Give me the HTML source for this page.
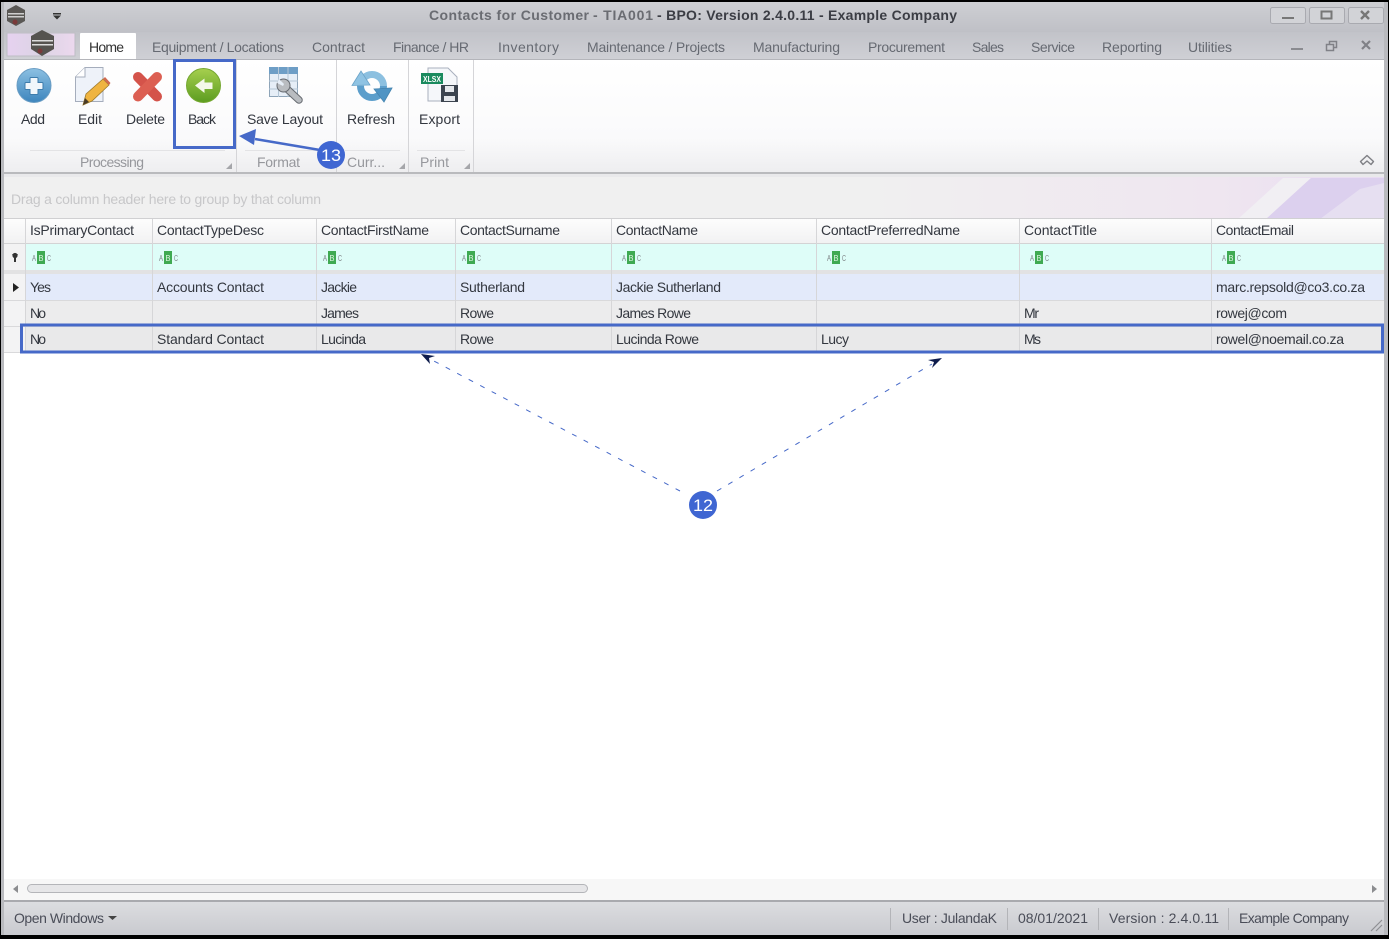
<!DOCTYPE html>
<html><head><meta charset="utf-8"><title>Contacts for Customer</title>
<style>html,body{margin:0;padding:0;background:#fff}svg{display:block;filter:blur(.35px)}text{font-family:"Liberation Sans",sans-serif;font-size:14px;fill:#33373f}</style></head>
<body>
<svg xmlns="http://www.w3.org/2000/svg" width="1389" height="939" viewBox="0 0 1389 939">
<defs>
<linearGradient id="tb" x1="0" y1="0" x2="0" y2="1"><stop offset="0" stop-color="#cfd0d4"/><stop offset="1" stop-color="#bfc0c6"/></linearGradient>
<linearGradient id="tabs" x1="0" y1="0" x2="0" y2="1"><stop offset="0" stop-color="#c2c3c9"/><stop offset="1" stop-color="#cfd0d5"/></linearGradient>
<linearGradient id="rib" x1="0" y1="0" x2="0" y2="1"><stop offset="0" stop-color="#fff"/><stop offset="0.7" stop-color="#fafafb"/><stop offset="1" stop-color="#eeeef0"/></linearGradient>
<linearGradient id="st" x1="0" y1="0" x2="0" y2="1"><stop offset="0" stop-color="#dcdde0"/><stop offset="1" stop-color="#c9cacf"/></linearGradient>
<linearGradient id="hd" x1="0" y1="0" x2="0" y2="1"><stop offset="0" stop-color="#fdfdfd"/><stop offset="1" stop-color="#f1f1f2"/></linearGradient>
<linearGradient id="blue" x1="0" y1="0" x2="0" y2="1"><stop offset="0" stop-color="#8cc0e2"/><stop offset="1" stop-color="#3d85bd"/></linearGradient>
<linearGradient id="green" x1="0" y1="0" x2="0" y2="1"><stop offset="0" stop-color="#a6cf4e"/><stop offset="1" stop-color="#5c9c20"/></linearGradient>
<linearGradient id="logo" x1="0" y1="0" x2="1" y2="0"><stop offset="0" stop-color="#e6d2f0"/><stop offset="0.5" stop-color="#dcd4e4"/><stop offset="1" stop-color="#ecd8ee"/></linearGradient>
<linearGradient id="purp" x1="0" y1="0" x2="1" y2="0"><stop offset="0" stop-color="#f0f0f0"/><stop offset="0.62" stop-color="#f0f0f0"/><stop offset="0.88" stop-color="#efe6f0"/><stop offset="1" stop-color="#e8dcf2"/></linearGradient>
</defs>

<rect width="1389" height="939" fill="#fff"/>
<!-- title bar -->
<rect x="0" y="0" width="1389" height="32" fill="url(#tb)"/>
<rect x="0" y="32" width="1389" height="27" fill="url(#tabs)"/>
<!-- app icon -->
<polygon points="16,5 25,10 25,21 16,26 7,21 7,10" fill="#5a5855"/>
<rect x="8" y="13" width="16" height="1.500" fill="#cfcfcf"/><rect x="8" y="16" width="16" height="1.500" fill="#cfcfcf"/>
<circle cx="15" cy="22" r="2.500" fill="#7a3a3a"/>
<path d="M53 13h8v1.500h-8zM53 15.500h8l-4 4z" fill="#333"/>
<text x="429" y="20" textLength="160" font-weight="bold" style="fill:#6a6c72">Contacts for Customer</text>
<text x="593" y="20" textLength="60" font-weight="bold" style="fill:#6a6c72"> - TIA001</text>
<text x="657" y="20" textLength="300" font-weight="bold" style="fill:#3b3d44">- BPO: Version 2.4.0.11 - Example Company</text>
<!-- window buttons -->
<g fill="#d2d3d7" stroke="#a9aab0"><rect x="1270.500" y="7.500" width="35" height="16" rx="2"/><rect x="1309.500" y="7.500" width="35" height="16" rx="2"/><rect x="1348.500" y="7.500" width="35" height="16" rx="2"/></g>
<rect x="1282" y="17" width="12" height="2" fill="#777"/>
<rect x="1321.500" y="11.500" width="10" height="7" fill="none" stroke="#777" stroke-width="2"/>
<path d="M1361 11l8 8M1369 11l-8 8" stroke="#777" stroke-width="2.400"/>

<!-- logo tab -->
<rect x="7" y="33" width="68" height="23" fill="url(#logo)" stroke="#bdbdc4"/>
<polygon points="42,30 54,36 54,49 42,56 31,49 31,36" fill="#55534f"/>
<rect x="32" y="40" width="21" height="1.500" fill="#dcdcdc"/><rect x="32" y="44" width="21" height="1.500" fill="#dcdcdc"/>
<circle cx="40" cy="51" r="2.500" fill="#7a3a3a"/>
<!-- Home tab -->
<path d="M80 59V34q0-1 1-1h54q1 0 1 1V59z" fill="#fff"/>
<text x="89" y="52" textLength="35" style="fill:#333">Home</text>
<text x="152" y="52" textLength="132" style="fill:#666a72">Equipment / Locations</text>
<text x="312" y="52" textLength="53" style="fill:#666a72">Contract</text>
<text x="393" y="52" textLength="76" style="fill:#666a72">Finance / HR</text>
<text x="498" y="52" textLength="61" style="fill:#666a72">Inventory</text>
<text x="587" y="52" textLength="138" style="fill:#666a72">Maintenance / Projects</text>
<text x="753" y="52" textLength="87" style="fill:#666a72">Manufacturing</text>
<text x="868" y="52" textLength="77" style="fill:#666a72">Procurement</text>
<text x="972" y="52" textLength="32" style="fill:#666a72">Sales</text>
<text x="1031" y="52" textLength="44" style="fill:#666a72">Service</text>
<text x="1102" y="52" textLength="60" style="fill:#666a72">Reporting</text>
<text x="1188" y="52" textLength="44" style="fill:#666a72">Utilities</text>
<rect x="1291" y="48" width="12" height="2" fill="#8a8b90"/>
<path d="M1326.500 44.500h7v6h-7zM1329.500 44.500v-3h7v6h-3" fill="none" stroke="#808187" stroke-width="1.500"/>
<path d="M1362 41l8 8M1370 41l-8 8" stroke="#808187" stroke-width="2.200"/>

<!-- ribbon -->
<rect x="4" y="59" width="1380" height="113" fill="url(#rib)"/>
<rect x="4" y="59" width="1380" height="1" fill="#b4b5ba"/>
<rect x="4" y="172" width="1380" height="2" fill="#b9babd"/>
<rect x="4" y="174" width="1380" height="3" fill="#e9e9eb"/>
<g fill="#d5d5d8"><rect x="236" y="60" width="1" height="112"/><rect x="336" y="60" width="1" height="112"/><rect x="408" y="60" width="1" height="112"/><rect x="473" y="60" width="1" height="112"/></g>
<g fill="#e3e3e5"><rect x="30" y="150" width="195" height="1"/><rect x="245" y="150" width="82" height="1"/><rect x="345" y="150" width="55" height="1"/><rect x="417" y="150" width="48" height="1"/></g>

<!-- Add -->
<circle cx="34" cy="85.500" r="17" fill="url(#blue)" stroke="#6a9dc4"/>
<path d="M31 77.500h6a1 1 0 0 1 1 1v4h4a1 1 0 0 1 1 1v5a1 1 0 0 1-1 1h-4v4a1 1 0 0 1-1 1h-6a1 1 0 0 1-1-1v-4h-4a1 1 0 0 1-1-1v-5a1 1 0 0 1 1-1h4v-4a1 1 0 0 1 1-1z" fill="#f0f6fb" stroke="#3d7cac"/>
<!-- Edit -->
<path d="M85 67.500h18v34H75.500V77z" fill="#eef2f9" stroke="#a5adbc"/><path d="M85 67.500V77h-9.500" fill="#fff" stroke="#a5adbc"/>
<path d="M83 105l3-11 17-15 6 6-17 16z" fill="#efb440" stroke="#9d7a2c" stroke-width=".8"/>
<path d="M103 79l6 6 1.500-2-5.500-6z" fill="#cf6a50"/><path d="M83 105l2-7 4 4z" fill="#4a3c28"/>
<!-- Delete -->
<path d="M138 77l19 19.500" stroke="#d4534a" stroke-width="10" stroke-linecap="round"/>
<path d="M157 77l-19 19.500" stroke="#dc5f52" stroke-width="10" stroke-linecap="round"/>
<!-- Back -->
<circle cx="203.500" cy="85.500" r="17" fill="url(#green)" stroke="#76a832"/>
<path d="M195 85.500l9.500-7v4h8v6.500h-8v4z" fill="#f4f8e8"/>
<!-- Save Layout -->
<rect x="269.500" y="67.500" width="28" height="29" fill="#e6eef7" stroke="#8ea4b8"/><rect x="269" y="67" width="29" height="7" fill="#6e9ec6"/>
<path d="M269 81h29M269 89h29M278.500 67v30M288 67v30" stroke="#b4c6d6"/>
<path d="M285 87L299 100" stroke="#666a70" stroke-width="7.500" stroke-linecap="round"/>
<path d="M285 87L299 100" stroke="#b9bcc0" stroke-width="5.500" stroke-linecap="round"/>
<circle cx="283.500" cy="85.500" r="6.500" fill="#b9bcc0" stroke="#666a70"/>
<path d="M279 79l5 5-1 2-6-3z" fill="#e6eef7"/>
<!-- Refresh -->
<path d="M360.500 86A11.500 11.500 0 0 1 383.500 86" fill="none" stroke="#8cc0e0" stroke-width="7"/>
<path d="M383.500 86A11.500 11.500 0 0 1 360.500 86" fill="none" stroke="#5c9ecb" stroke-width="7"/>
<path d="M352 85.500L361 71l9 14z" fill="#8fc3e3" stroke="#6aa3c8" stroke-width=".8"/>
<path d="M392 88L384 102l-10-13z" fill="#4f94c4" stroke="#4585b0" stroke-width=".8"/>
<!-- Export -->
<path d="M428 68h20l9 9v24h-29z" fill="#f5f7fa" stroke="#a9b0bd"/><rect x="421" y="73" width="22" height="11" fill="#1a8a5e"/>
<text x="423" y="82" textLength="18" lengthAdjust="spacingAndGlyphs" font-weight="bold" style="fill:#fff;font-size:8px">XLSX</text>
<rect x="441" y="85" width="17" height="17" fill="#3c444f"/><rect x="445" y="86" width="9" height="6" fill="#e5e8ec"/><rect x="444" y="96" width="11" height="5" fill="#e5e8ec"/>

<text x="21" y="124" textLength="24">Add</text>
<text x="78" y="124" textLength="24">Edit</text>
<text x="126" y="124" textLength="39">Delete</text>
<text x="188" y="124" textLength="28">Back</text>
<text x="247" y="124" textLength="76">Save Layout</text>
<text x="347" y="124" textLength="48">Refresh</text>
<text x="419" y="124" textLength="41">Export</text>
<text x="80" y="167" textLength="64" style="fill:#96979c">Processing</text>
<text x="257" y="167" textLength="43" style="fill:#96979c">Format</text>
<text x="347" y="167" textLength="38" style="fill:#96979c">Curr...</text>
<text x="420" y="167" textLength="29" style="fill:#96979c">Print</text>
<g fill="#a5a6aa"><path d="M232 163v6h-6z"/><path d="M405 163v6h-6z"/><path d="M470 163v6h-6z"/></g>
<path d="M1360.500 161.500l6.500-6 6.500 6-2.500 3-4-3.500-4 3.500z" fill="#f0f0f2" stroke="#7f8085" stroke-width="1.400" stroke-linejoin="round"/>

<!-- group panel -->
<rect x="4" y="177" width="1380" height="42" fill="url(#purp)"/>
<path d="M1238 219l45-41h28l-45 41z" fill="#f1eff3"/>
<path d="M1266 219l45-41h73v41z" fill="#dcd0ee"/>
<path d="M1320 219l40-30 24-6v36z" fill="#e6dff1"/>
<text x="11" y="204" textLength="310" style="fill:#c7c7c9">Drag a column header here to group by that column</text>

<!-- grid header -->
<rect x="4" y="219" width="1380" height="25" fill="url(#hd)"/>
<rect x="4" y="218" width="1380" height="1" fill="#d0d0d2"/>
<rect x="4" y="244" width="1380" height="26" fill="#defdf8"/>
<rect x="4" y="244" width="21" height="26" fill="#f2f2f3"/>
<rect x="4" y="243" width="1380" height="1" fill="#d3d3d5"/>
<rect x="4" y="270" width="1380" height="4" fill="#e2e2e3"/>
<rect x="25" y="274" width="1359" height="26" fill="#e3eafa"/>
<rect x="25" y="300" width="1359" height="26" fill="#ececed"/>
<rect x="25" y="326" width="1359" height="26" fill="#e9e9ea"/>
<rect x="4" y="274" width="21" height="78" fill="#f3f3f4"/>
<g fill="#d9d9db"><rect x="4" y="300" width="1380" height="1"/><rect x="4" y="326" width="1380" height="1"/><rect x="4" y="352" width="1380" height="1"/></g>
<g fill="#d6d6d8"><rect x="25" y="219" width="1" height="133"/><rect x="152" y="219" width="1" height="133"/><rect x="316" y="219" width="1" height="133"/><rect x="455" y="219" width="1" height="133"/><rect x="611" y="219" width="1" height="133"/><rect x="816" y="219" width="1" height="133"/><rect x="1019" y="219" width="1" height="133"/><rect x="1211" y="219" width="1" height="133"/></g>

<text x="30" y="235" textLength="104">IsPrimaryContact</text>
<text x="157" y="235" textLength="107">ContactTypeDesc</text>
<text x="321" y="235" textLength="108">ContactFirstName</text>
<text x="460" y="235" textLength="100">ContactSurname</text>
<text x="616" y="235" textLength="82">ContactName</text>
<text x="821" y="235" textLength="139">ContactPreferredName</text>
<text x="1024" y="235" textLength="73">ContactTitle</text>
<text x="1216" y="235" textLength="78">ContactEmail</text>

<!-- filter icons -->
<g id="f1"><text x="32" y="261" textLength="4" lengthAdjust="spacingAndGlyphs" style="font-size:8px;fill:#7c8285">A</text><rect x="37" y="251" width="8" height="13" fill="#3faa52"/><text x="38.500" y="261" textLength="5" lengthAdjust="spacingAndGlyphs" style="font-size:8px;fill:#dff5e3">B</text><text x="47" y="261" textLength="4" lengthAdjust="spacingAndGlyphs" style="font-size:8px;fill:#7c8285">C</text></g>
<use href="#f1" x="127"/><use href="#f1" x="291"/><use href="#f1" x="430"/><use href="#f1" x="590"/><use href="#f1" x="795"/><use href="#f1" x="998"/><use href="#f1" x="1190"/>
<path d="M12 254h6l-2 3v5h-2v-5z" fill="#333"/><circle cx="15" cy="255.500" r="2.600" fill="#333"/>
<path d="M13 283l6 4.500-6 4.500z" fill="#222"/>

<text x="30" y="292" textLength="21">Yes</text>
<text x="157" y="292" textLength="107">Accounts Contact</text>
<text x="321" y="292" textLength="36">Jackie</text>
<text x="460" y="292" textLength="65">Sutherland</text>
<text x="616" y="292" textLength="105">Jackie Sutherland</text>
<text x="1216" y="292" textLength="149">marc.repsold@co3.co.za</text>
<text x="30" y="318" textLength="16">No</text>
<text x="321" y="318" textLength="38">James</text>
<text x="460" y="318" textLength="34">Rowe</text>
<text x="616" y="318" textLength="75">James Rowe</text>
<text x="1024" y="318" textLength="15">Mr</text>
<text x="1216" y="318" textLength="71">rowej@com</text>
<text x="30" y="344" textLength="16">No</text>
<text x="157" y="344" textLength="107">Standard Contact</text>
<text x="321" y="344" textLength="45">Lucinda</text>
<text x="460" y="344" textLength="34">Rowe</text>
<text x="616" y="344" textLength="83">Lucinda Rowe</text>
<text x="821" y="344" textLength="28">Lucy</text>
<text x="1024" y="344" textLength="17">Ms</text>
<text x="1216" y="344" textLength="128">rowel@noemail.co.za</text>

<!-- scrollbar -->
<rect x="4" y="879" width="1380" height="21" fill="#f7f7f7"/>
<rect x="27.500" y="884.500" width="560" height="8" rx="4" fill="#e6e6e8" stroke="#b4b5b9"/>
<path d="M18 885v8l-5-4z" fill="#8c8d90"/><path d="M1372 885v8l5-4z" fill="#8c8d90"/>

<!-- status bar -->
<rect x="4" y="900" width="1380" height="2" fill="#a9aaae"/>
<rect x="4" y="902" width="1380" height="33" fill="url(#st)"/>
<text x="14" y="923" textLength="90" style="fill:#4a4d58">Open Windows</text>
<path d="M108 916h9l-4.500 4z" fill="#444"/>
<g fill="#b3b4b8"><rect x="890" y="908" width="1" height="22"/><rect x="1007" y="908" width="1" height="22"/><rect x="1098" y="908" width="1" height="22"/><rect x="1228" y="908" width="1" height="22"/></g>
<text x="902" y="923" textLength="95" style="fill:#4a4d58">User : JulandaK</text>
<text x="1018" y="923" textLength="70" style="fill:#4a4d58">08/01/2021</text>
<text x="1109" y="923" textLength="110" style="fill:#4a4d58">Version : 2.4.0.11</text>
<text x="1239" y="923" textLength="110" style="fill:#4a4d58">Example Company</text>
<path d="M1371 931l11-11M1376 931l6-6" stroke="#8e8f93" stroke-width="1.200"/>

<!-- frame -->
<rect x="1" y="1" width="3" height="936" fill="#b9babe"/>
<rect x="1384" y="1" width="4" height="936" fill="#b9babe"/>
<rect x="0" y="0" width="1389" height="2" fill="#000"/>
<rect x="0" y="0" width="1" height="939" fill="#000"/>
<rect x="1388" y="0" width="1" height="939" fill="#000"/>
<rect x="0" y="935" width="1389" height="4" fill="#000"/>

<!-- annotations -->
<rect x="174.500" y="60.500" width="60" height="87" fill="none" stroke="#4669c8" stroke-width="3"/>
<rect x="21.500" y="325" width="1361" height="27" fill="none" stroke="#4669c8" stroke-width="3"/>
<path d="M320 150L255 139" stroke="#4669c8" stroke-width="2.500"/>
<path d="M239 136l17-7-2 16z" fill="#4669c8"/>
<circle cx="331" cy="155" r="14" fill="#3f66d2"/>
<text x="321" y="161" textLength="20" lengthAdjust="spacingAndGlyphs" style="fill:#fff;font-size:17px">13</text>
<path d="M680 491L432 360M717 491L932 364" stroke="#4669c8" stroke-width="1" stroke-dasharray="5 8" fill="none"/>
<path d="M421 354l14 2-6 2 1 6z" fill="#0e1c4c"/>
<path d="M942 358l-14 2 6 2-2 6z" fill="#0e1c4c"/>
<circle cx="703" cy="505" r="14" fill="#3f66d2"/>
<text x="693" y="511" textLength="20" lengthAdjust="spacingAndGlyphs" style="fill:#fff;font-size:17px">12</text>
</svg>
</body></html>
